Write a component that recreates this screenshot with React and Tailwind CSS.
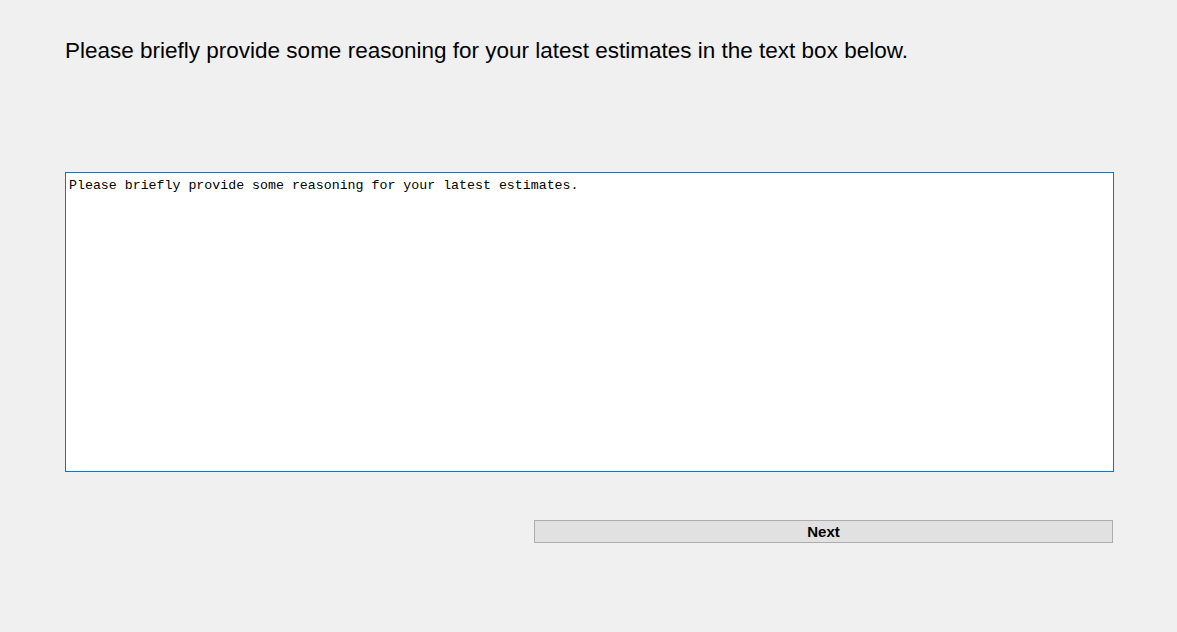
import React from 'react';

export default function App() {
  return (
    <div className="w-[1177px] h-[632px] bg-[#f0f0f0] overflow-hidden pl-[65px] pt-[37px] font-['Liberation_Sans',Arial,sans-serif]">
      {/* Prompt */}
      <h1 className="text-[22.5px] leading-[28px] text-black">
        Please briefly provide some reasoning for your latest estimates in the text box below.
      </h1>

      {/* Reasoning box */}
      <textarea
        className="block mt-[107px] w-[1049px] h-[300px] border border-[#0078d7] bg-white pl-[3px] pr-[3px] pt-[5px] pb-[3px] text-[13.28px] leading-[16px] text-black resize-none outline-none font-['Liberation_Mono',monospace]"
        defaultValue="Please briefly provide some reasoning for your latest estimates."
      />

      {/* Next button */}
      <div className="flex justify-end w-[1048px] mt-[48px]">
        <button className="w-[579px] h-[23px] bg-[#e1e1e1] border border-[#adadad] text-[15px] leading-[21px] font-bold text-black">
          Next
        </button>
      </div>
    </div>
  );
}
